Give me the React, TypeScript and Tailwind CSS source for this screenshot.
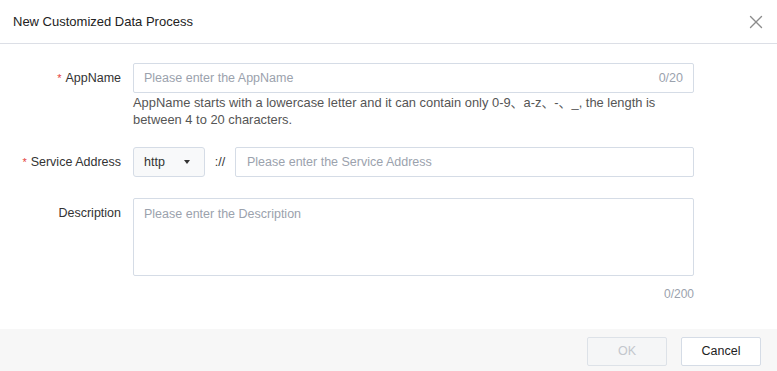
import { X } from "lucide-react";

const font = { fontFamily: '"Liberation Sans", "Noto Sans CJK SC", Arial, sans-serif' };

function Label({ text, required }: { text: string; required?: boolean }) {
  return (
    <div className="w-[121px] shrink-0 flex justify-end items-center h-[30px] text-[12.5px] text-[#333]">
      {required && <span className="text-[#e53e3e] mr-[4px] text-[11px]">*</span>}
      {text}
    </div>
  );
}

export default function App() {
  return (
    <div className="w-[777px] h-[371px] bg-white flex flex-col" style={font}>
      {/* Header */}
      <div className="h-[44px] shrink-0 border-b border-[#dcdfe6] flex items-center justify-between pl-[13px] pr-[10px]">
        <span className="text-[13px] text-[#222]">New Customized Data Process</span>
        <X className="w-[22px] h-[22px] text-[#8c8c8c]" strokeWidth={1.5} />
      </div>

      {/* Body */}
      <div className="flex-1 pt-[19px] flex flex-col">
        {/* AppName */}
        <div className="flex gap-[12px]">
          <Label text="AppName" required />
          <div className="w-[561px]">
            <div className="h-[30px] border border-[#d5dce6] rounded-[2px] flex items-center justify-between px-[10px] text-[12.5px]">
              <span className="text-[#9ba2ad]">Please enter the AppName</span>
              <span className="text-[#9ba2ad]">0/20</span>
            </div>
            <p className="text-[12.9px] leading-[17px] text-[#555] mt-[1px]">
              AppName starts with a lowercase letter and it can contain only 0-9、a-z、-、_, the length is between 4 to 20 characters.
            </p>
          </div>
        </div>

        {/* Service Address */}
        <div className="flex gap-[12px] mt-[19px]">
          <Label text="Service Address" required />
          <div className="w-[561px] flex items-center">
            <div className="w-[72px] h-[30px] border border-[#d5dce6] rounded-[3px] bg-[#f8f9fa] flex items-center justify-between pl-[10px] pr-[14px] text-[12.5px] text-[#333]">
              <span>http</span>
              <span className="w-0 h-0 border-l-[3.5px] border-r-[3.5px] border-t-[4px] border-l-transparent border-r-transparent border-t-[#333]" />
            </div>
            <span className="w-[30px] text-center text-[12.5px] text-[#333]">://</span>
            <div className="flex-1 h-[30px] border border-[#d5dce6] rounded-[2px] flex items-center px-[11px] text-[12.5px] text-[#9ba2ad]">
              Please enter the Service Address
            </div>
          </div>
        </div>

        {/* Description */}
        <div className="flex gap-[12px] mt-[21px]">
          <div className="w-[121px] shrink-0 flex justify-end pt-[6px] text-[12.5px] text-[#333]">Description</div>
          <div className="w-[561px]">
            <div className="h-[78px] border border-[#d5dce6] rounded-[2px] px-[10px] pt-[6px] text-[12.5px] text-[#9ba2ad]">
              Please enter the Description
            </div>
            <div className="text-right text-[12px] text-[#9ba2ad] mt-[9px]">0/200</div>
          </div>
        </div>
      </div>

      {/* Footer */}
      <div className="h-[42px] shrink-0 bg-[#f7f7f7] flex justify-end items-start pt-[8px] pr-[16px] gap-[14px]">
        <button className="w-[80px] h-[29px] border border-[#dde2e8] rounded-[2px] bg-[#f5f6f7] text-[12.5px] text-[#c3c7cd]">OK</button>
        <button className="w-[80px] h-[29px] border border-[#d5dce6] rounded-[2px] bg-white text-[12.5px] text-[#222]">Cancel</button>
      </div>
    </div>
  );
}
